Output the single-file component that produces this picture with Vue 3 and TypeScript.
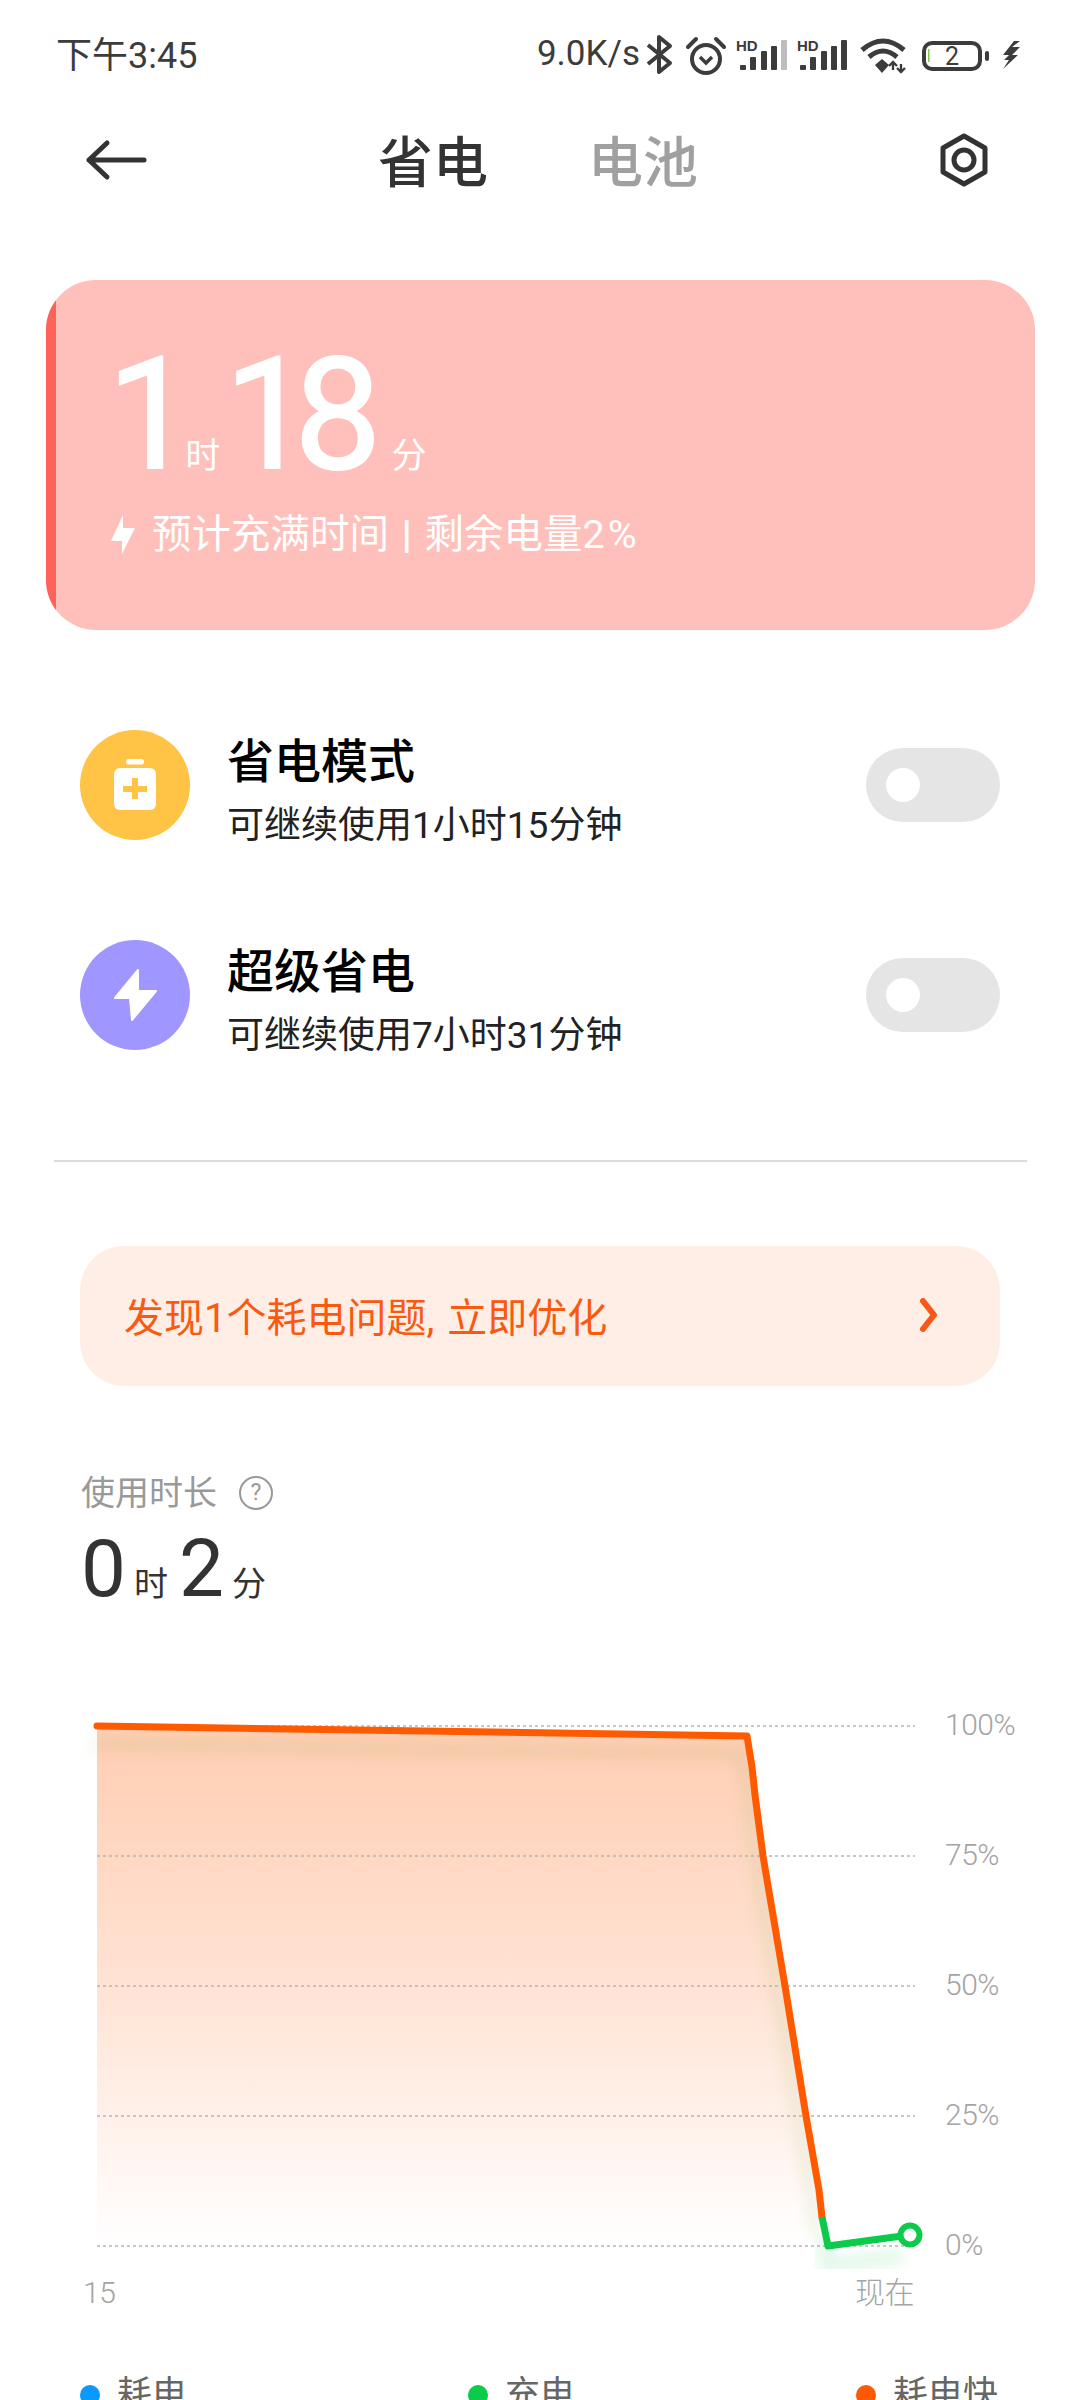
<script setup lang="ts">
const modes = [
  { title: '省电模式', sub: '可继续使用1小时15分钟', kind: 'save' },
  { title: '超级省电', sub: '可继续使用7小时31分钟', kind: 'super' },
];

const gridLines = [
  { y: 1726, label: '100%' },
  { y: 1856, label: '75%' },
  { y: 1986, label: '50%' },
  { y: 2116, label: '25%' },
  { y: 2246, label: '0%' },
];

const bars = [
  { x: 0, top: 25 },
  { x: 10, top: 17 },
  { x: 21, top: 11 },
  { x: 31, top: 6 },
  { x: 41, top: 0 },
];

const orangeLine =
  '97,1726 747,1736 752,1767 755,1795 763,1856 785,1986 806,2116 819,2190 822,2217';
const greenLine = '822,2217 828,2246 902,2236';
const fillArea = `${orangeLine} 826,2246 97,2246`;

const legend = [
  { label: '耗电', color: '#0a99ff', width: 388 },
  { label: '充电', color: '#0ccb4b', width: 388 },
  { label: '耗电快', color: '#ff5a00', width: 0 },
];
</script>

<template>
  <div class="page">
    <div class="status">
      <span class="clock">下午3:45</span>
      <span class="speed">9.0K/s</span>
      <svg class="status-icons" width="384" height="44" viewBox="646 30 384 44">
        <polyline points="648,42 670,60 659,69 659,34 670,43 648,61" fill="none" stroke="#3c3c3c" stroke-width="4" stroke-linejoin="round" />
        <circle cx="706" cy="56" r="14" fill="none" stroke="#3c3c3c" stroke-width="4" />
        <polyline points="700,54 706,60 712,54" fill="none" stroke="#3c3c3c" stroke-width="3.4" />
        <path d="M688 44 L696 36 M716 36 L724 44" stroke="#3c3c3c" stroke-width="4" stroke-linecap="round" />
        <g transform="translate(740 37)">
          <rect v-for="(b, i) in bars" :key="i" :x="b.x" :y="b.top" width="6" :height="30 - b.top" rx="1" :fill="i === 4 ? '#bdbdbd' : '#3c3c3c'" />
        </g>
        <g transform="translate(800 37)">
          <rect v-for="(b, i) in bars" :key="i" :x="b.x" :y="b.top" width="6" :height="30 - b.top" rx="1" fill="#3c3c3c" />
        </g>
        <text x="736" y="48" class="hd">HD</text>
        <text x="797" y="48" class="hd">HD</text>
        <path d="M862 47 Q883 29 904 47 M869 54 Q883 42 897 54" fill="none" stroke="#3c3c3c" stroke-width="5" />
        <path d="M875 62 L882 56 L889 62 L882 70 Z" fill="#3c3c3c" />
        <path d="M893 67 V60 M889 63 L893 59 L897 63 M901 61 V68 M897 65 L901 69 L905 65" fill="none" stroke="#3c3c3c" stroke-width="2.4" />
        <rect x="924" y="40" width="56" height="26" rx="8" fill="none" stroke="#3c3c3c" stroke-width="4" />
        <rect x="928" y="46" width="1.5" height="13" fill="#7ec850" />
        <text x="952" y="62" class="batt">2</text>
        <rect x="985" y="48" width="4" height="10" rx="2" fill="#3c3c3c" />
        <polygon points="1014,38 1003,52 1009,52 1004,57 1009,57 1003,66 1018,52 1012,52 1020,44 1012,44 1020,38" fill="#3c3c3c" />
      </svg>
    </div>

    <div class="nav">
      <svg width="80" height="50" viewBox="80 135 80 50">
        <path d="M107 143 L89 160 L107 177 M89 160 H144" fill="none" stroke="#333" stroke-width="5" stroke-linecap="round" stroke-linejoin="round" />
      </svg>
      <div class="tabs">
        <span class="tab active">省电</span>
        <span class="tab">电池</span>
      </div>
      <svg width="56" height="60" viewBox="936 130 56 60">
        <polygon points="964,136 985,148 985,172 964,184 943,172 943,148" fill="none" stroke="#333" stroke-width="5" stroke-linejoin="round" />
        <circle cx="964" cy="160" r="10" fill="none" stroke="#333" stroke-width="5" />
      </svg>
    </div>

    <div class="charge-card">
      <div class="strip"></div>
      <div class="remain">
        <span class="big">1</span><span class="unit first">时</span><span class="big">18</span><span class="unit">分</span>
      </div>
      <div class="hint">
        <svg width="26" height="40" viewBox="0 0 26 40">
          <polygon points="13,0 1,26 12,26 12,39 25,13 13,13" fill="#fff" />
        </svg>
        <span>预计充满时间 <b class="sep">|</b> 剩余电量<span class="pct">2%</span></span>
      </div>
    </div>

    <div class="modes">
      <div v-for="m in modes" :key="m.kind" class="mode">
        <div class="mode-icon" :class="m.kind">
          <svg v-if="m.kind === 'save'" width="110" height="110" viewBox="0 0 110 110">
            <rect x="46" y="29" width="18" height="5.5" rx="2.5" fill="#fff" />
            <rect x="34" y="38" width="42" height="42" rx="6" fill="#fff" />
            <path d="M43 59 H67 M55 48 V69" stroke="#ffc445" stroke-width="6" />
          </svg>
          <svg v-else width="110" height="110" viewBox="0 0 110 110">
            <polygon points="58,30 35,58 50,58 52,80 76,51 58,51" fill="#fff" stroke="#fff" stroke-width="2" stroke-linejoin="round" />
          </svg>
        </div>
        <div class="mode-text">
          <div class="mode-title">{{ m.title }}</div>
          <div class="mode-sub">{{ m.sub }}</div>
        </div>
        <div class="switch"><span class="knob"></span></div>
      </div>
    </div>

    <div class="divider"></div>

    <div class="banner">
      <span>发现1个耗电问题, 立即优化</span>
      <svg width="18" height="34" viewBox="0 0 18 34">
        <polyline points="3,3 14,17 3,31" fill="none" stroke="#f8581a" stroke-width="6" stroke-linecap="round" stroke-linejoin="round" />
      </svg>
    </div>

    <div class="usage">
      <div class="usage-label">
        <span>使用时长</span>
        <span class="help">?</span>
      </div>
      <div class="usage-value">
        <span class="num">0</span><span class="unit-dark first">时</span><span class="num">2</span><span class="unit-dark">分</span>
      </div>
    </div>

    <svg class="chart" width="1080" height="630" viewBox="0 1700 1080 630">
      <defs>
        <linearGradient id="fade" x1="0" y1="0" x2="0" y2="1">
          <stop offset="0" stop-color="#ff5a00" stop-opacity="0.3" />
          <stop offset="0.5" stop-color="#ff5a00" stop-opacity="0.17" />
          <stop offset="1" stop-color="#ff5a00" stop-opacity="0" />
        </linearGradient>
        <filter id="soft" x="-10%" y="-10%" width="120%" height="120%">
          <feGaussianBlur stdDeviation="7" />
        </filter>
      </defs>
      <polygon :points="fillArea" fill="url(#fade)" />
      <polyline :points="orangeLine" transform="translate(-5 18)" fill="none" stroke="#5f9a30" stroke-opacity="0.13" stroke-width="10" filter="url(#soft)" />
      <polyline :points="greenLine" transform="translate(0 20)" fill="none" stroke="#0ccb4b" stroke-opacity="0.13" stroke-width="14" filter="url(#soft)" />
      <g v-for="g in gridLines" :key="g.y">
        <line x1="97" :y1="g.y" x2="915" :y2="g.y" stroke="#b5b5b5" stroke-width="1.4" stroke-dasharray="3 3" />
        <text x="945" :y="g.y + 9" class="axis">{{ g.label }}</text>
      </g>
      <polyline :points="orangeLine" fill="none" stroke="#ff5a00" stroke-width="7" stroke-linecap="round" stroke-linejoin="round" />
      <polyline :points="greenLine" fill="none" stroke="#0ccb4b" stroke-width="7" stroke-linejoin="round" />
      <circle cx="910" cy="2235" r="9.5" fill="#fff" stroke="#0ccb4b" stroke-width="6" />
      <text x="83" y="2303" class="axis">15</text>
      <text x="855" y="2303" class="axis">现在</text>
    </svg>

    <div class="legend">
      <div v-for="l in legend" :key="l.label" class="legend-item" :style="{ width: l.width ? l.width + 'px' : 'auto' }">
        <span class="dot" :style="{ background: l.color }"></span>
        <span>{{ l.label }}</span>
      </div>
    </div>
  </div>
</template>

<style scoped>
.page {
  width: 1080px;
  height: 2400px;
  overflow: hidden;
  background: #fff;
  font-family: Roboto, "Noto Sans CJK SC", sans-serif;
  color: #333;
  display: flex;
  flex-direction: column;
}

.status {
  height: 107px;
  padding: 0 0 0 56px;
  display: flex;
  align-items: center;
  color: #3c3c3c;
  flex: none;
}

.clock {
  font-size: 36px;
  margin-top: -3px;
}

.speed {
  margin-left: auto;
  font-size: 35px;
  margin-right: 6px;
}

.status-icons {
  flex: none;
  margin-right: 50px;
  margin-top: 2px;
}

.hd {
  font-size: 15px;
  font-weight: 700;
  fill: #3c3c3c;
  font-family: "Liberation Sans", sans-serif;
}

.batt {
  font-size: 25px;
  fill: #3c3c3c;
  text-anchor: middle;
}

.nav {
  height: 105px;
  flex: none;
  padding: 0 88px 0 80px;
  display: flex;
  align-items: center;
  justify-content: space-between;
}

.tabs {
  display: flex;
  gap: 100px;
  margin-left: -20px;
  margin-top: -3px;
}

.tab {
  font-size: 55px;
  font-weight: 500;
  color: #a0a0a0;
}

.tab.active {
  color: #333;
}

.charge-card {
  position: relative;
  overflow: hidden;
  flex: none;
  margin: 68px 45px 0 46px;
  height: 350px;
  border-radius: 50px;
  background: #ffbfba;
  color: #fff;
  padding: 0 0 0 61px;
  box-sizing: border-box;
}

.strip {
  position: absolute;
  left: 0;
  top: 0;
  bottom: 0;
  width: 10px;
  background: #ff6259;
}

.remain {
  display: flex;
  align-items: baseline;
  height: 175px;
  padding-top: 25px;
  line-height: 220px;
}

.big {
  font-size: 155px;
  -webkit-text-stroke: 2px #fff;
  letter-spacing: -17px;
}

.unit {
  font-size: 35px;
  margin-left: 27px;
}

.unit.first {
  margin-left: 8px;
  margin-right: 4px;
}

.hint {
  margin-top: 33px;
  margin-left: 3px;
  display: flex;
  align-items: center;
  gap: 16px;
  font-size: 39.5px;
  line-height: 44px;
  word-spacing: 3px;
}

.sep {
  font-weight: 700;
}

.pct {
  letter-spacing: 3px;
}

.modes {
  flex: none;
  margin: 100px 80px 0;
  display: flex;
  flex-direction: column;
  gap: 100px;
}

.mode {
  height: 110px;
  display: flex;
  align-items: center;
}

.mode-icon {
  width: 110px;
  height: 110px;
  border-radius: 50%;
  flex: none;
}

.mode-icon svg {
  display: block;
}

.mode-icon.save {
  background: #ffc445;
}

.mode-icon.super {
  background: #a096ff;
}

.mode-text {
  margin: 12px 0 0 37px;
  flex: 1;
}

.mode-title {
  font-size: 47px;
  font-weight: 500;
  line-height: 60px;
  color: #000;
}

.mode-sub {
  font-size: 37px;
  line-height: 50px;
  margin-top: 9px;
  color: #222;
}

.switch {
  width: 134px;
  height: 74px;
  border-radius: 37px;
  background: #e5e5e5;
  display: flex;
  align-items: center;
  padding-left: 20px;
  box-sizing: border-box;
}

.knob {
  width: 34px;
  height: 34px;
  border-radius: 50%;
  background: #fff;
}

.divider {
  flex: none;
  height: 1.5px;
  margin: 110px 53px 0 54px;
  background: #dcdcdc;
}

.banner {
  flex: none;
  margin: 84px 80px 0;
  height: 140px;
  border-radius: 44px;
  background: #ffeee6;
  color: #f95a10;
  font-size: 40px;
  word-spacing: 3px;
  padding: 0 62px 2px 44px;
  box-sizing: border-box;
  display: flex;
  align-items: center;
  justify-content: space-between;
}

.usage {
  flex: none;
  margin: 87px 0 0 81px;
}

.usage-label {
  display: flex;
  align-items: center;
  gap: 22px;
  font-size: 34px;
  line-height: 40px;
  color: #999;
}

.help {
  width: 30px;
  height: 30px;
  border: 2.5px solid #999;
  border-radius: 50%;
  font-size: 23px;
  line-height: 30px;
  text-align: center;
}

.usage-value {
  display: flex;
  align-items: baseline;
  height: 80px;
  margin-top: 16px;
  line-height: 80px;
}

.num {
  font-size: 80px;
}

.unit-dark {
  font-size: 34px;
  margin-left: 8px;
}

.unit-dark.first {
  margin-right: 11px;
}

.chart {
  flex: none;
  display: block;
  margin-top: 91px;
}

.axis {
  font-size: 30px;
  font-weight: 300;
  fill: #a4a4a4;
  letter-spacing: -0.5px;
}

.legend {
  flex: none;
  margin: 45px 0 0 80px;
  display: flex;
  font-size: 35px;
  line-height: 40px;
  color: #666;
}

.legend-item {
  display: flex;
  align-items: center;
  gap: 17px;
  flex: none;
}

.dot {
  width: 20px;
  height: 20px;
  border-radius: 50%;
}
</style>
